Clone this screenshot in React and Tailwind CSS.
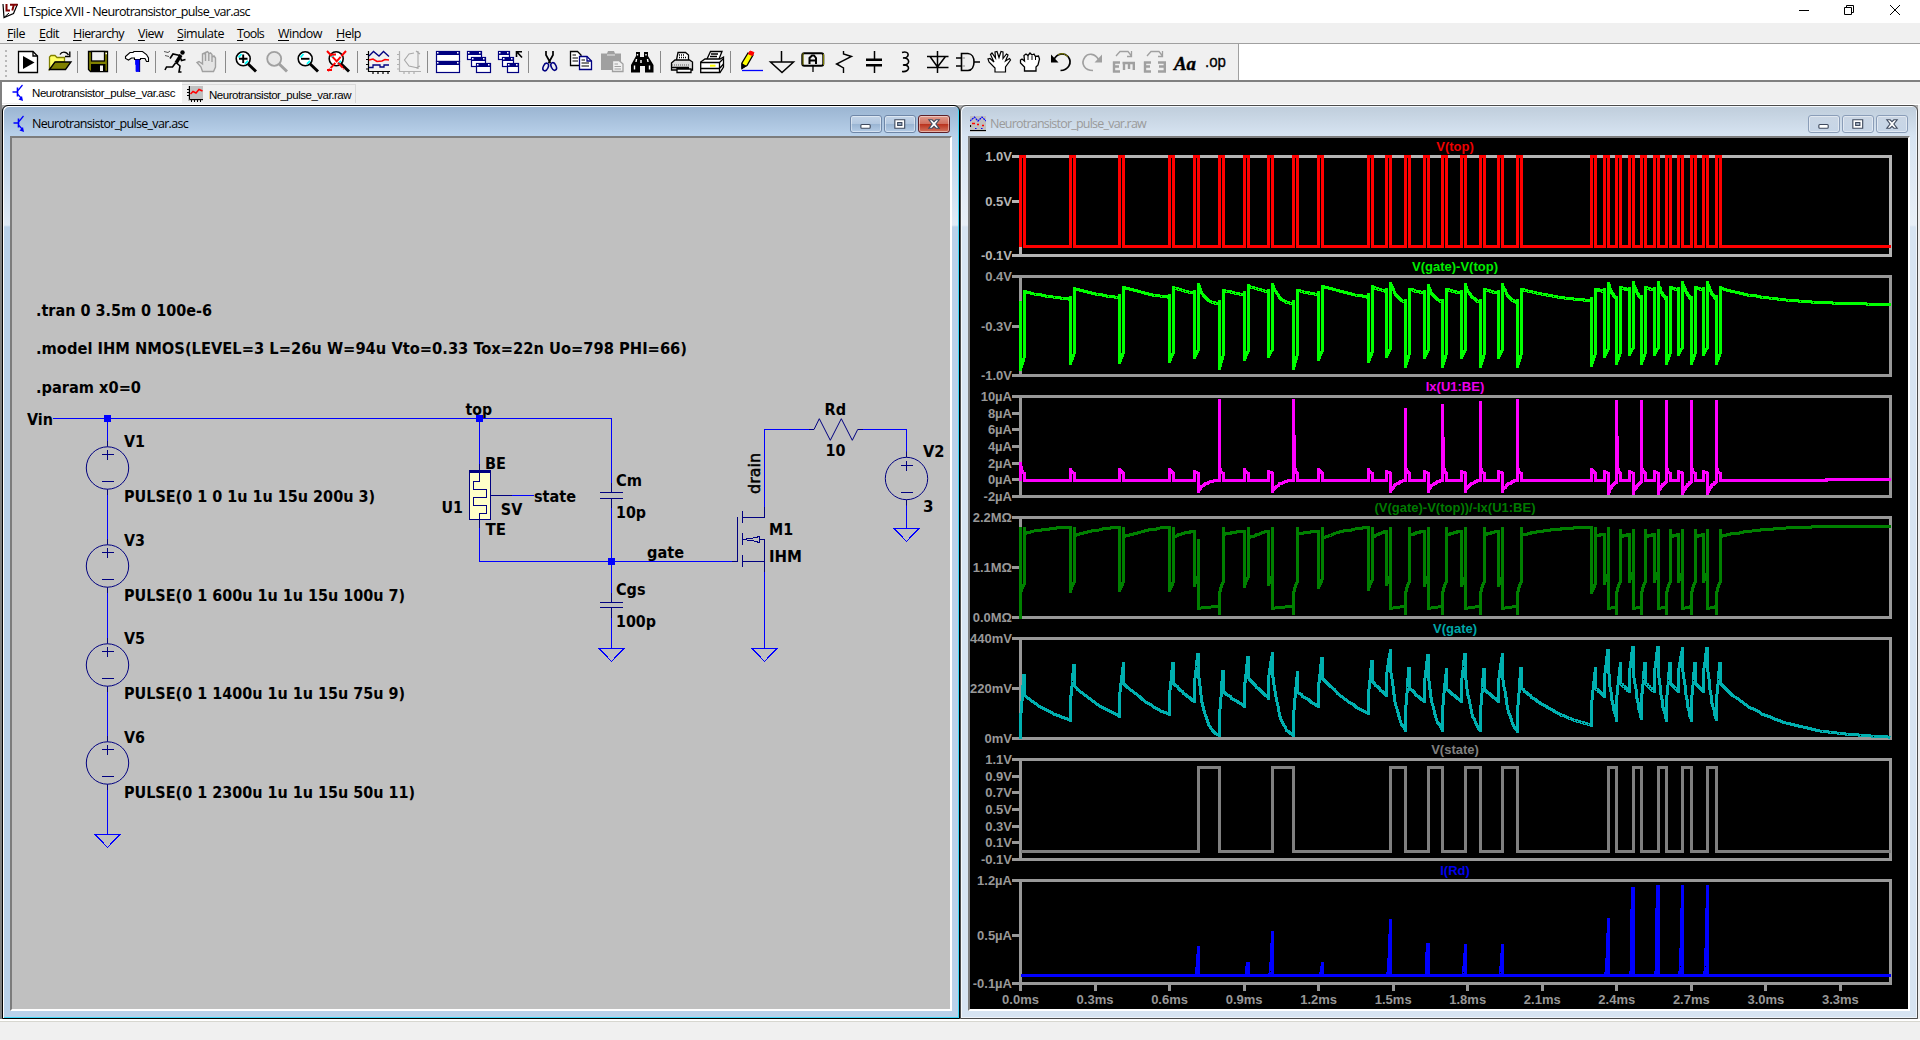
import React, { useLayoutEffect, useRef, useState } from "react";

/* ---------- text fitted to a given width ---------- */
function Fit({ w, className = "", children }) {
  const ref = useRef(null);
  const [ls, setLs] = useState(0);
  useLayoutEffect(() => {
    const n = ref.current.textContent.length;
    setLs((w - ref.current.getBoundingClientRect().width) / n);
  }, [w]);
  return (
    <span ref={ref} className={`inline-block whitespace-pre ${className}`} style={{ letterSpacing: ls }}>
      {children}
    </span>
  );
}

/* ---------- toolbar icons, each on a 24x24 grid ---------- */
const Icon = ({ children, w = 24, h = 24 }) => (
  <svg width={w} height={h} viewBox={`0 0 ${w} ${h}`} className="block shrink-0 overflow-visible" fill="none" stroke="#000" strokeWidth="1.3">
    {children}
  </svg>
);

const IconRun = () => (
  <Icon>
    <path d="M2.5 1.5H17L21.5 6V22.5H2.5Z" fill="#fff" />
    <path d="M17 1.5V6H21.5" />
    <path d="M7 6V19L18.5 12.5Z" fill="#000" stroke="none" />
  </Icon>
);
const IconOpen = () => (
  <Icon>
    <path d="M2.5 19.5V7L4 5.5H8L10 7.5H17.5V12H9Z" fill="#ffff66" stroke="#808000" />
    <path d="M2.5 19.5L8 12H24L18.5 19.5Z" fill="#808000" />
    <path d="M13 4.5C14.5 1.5 19 1 21.5 5M22.8 1.5V6.5H18" strokeWidth="1.4" />
  </Icon>
);
const IconSave = () => (
  <Icon>
    <path d="M2.5 1.5H21.5V21.5H4.5L2.5 19.5Z" fill="#808000" stroke="#000" />
    <rect x="5.5" y="1.5" width="13" height="9.5" fill="#f0f0f0" />
    <path d="M19.5 3.5H21" stroke="#fff" />
    <rect x="5" y="14" width="14.5" height="8" fill="#000" stroke="none" />
    <rect x="14" y="15.5" width="3" height="5.5" fill="#f0f0f0" stroke="none" />
  </Icon>
);
const IconHammer = () => (
  <Icon>
    <path d="M.5 6.5L5 2.5H8L9 1.5H17.5L21.5 4.5L23.5 8V11.5H21.5L20 8.5H15.5V9.5H9.5V8H6.5L3.5 10L.5 8.5Z" fill="#fff" strokeWidth="1.1" />
    <path d="M10.5 10H14.5V14.5H14V21.5H11V14.5H10.5Z" fill="#0000ff" stroke="#0000ff" strokeWidth=".8" />
    <path d="M14.6 10V22" stroke="#000080" strokeWidth="1.1" />
  </Icon>
);
const IconMan = () => (
  <Icon>
    <circle cx="18.5" cy="2.5" r="2.2" fill="#000" stroke="none" />
    <path d="M17 5L12 13" strokeWidth="3.4" />
    <path d="M16 5.5L9 4L6 8.5M16 6.5L17.5 10.5L21.5 9.5M12 12.5L16 16L15 22L17.5 22M11.5 13L8.5 17H2.5L1 20" strokeWidth="1.6" />
    <path d="M0 1.5L4 2.5L6 1M1 5.5L5 6.5" strokeWidth="1" stroke="#555" />
  </Icon>
);
const IconHand = () => (
  <Icon>
    <path d="M7.5 21.5L6 17L2 12.5L4 11.5L7.5 14V4L9.5 3L10.5 5V11V2.5L12.5 1.5L13.8 3V11V4L15.5 3L17 4.5V12V7L19 6L20.5 8V17L18.5 21.5Z" fill="#e4e4e4" stroke="#a0a0a0" strokeWidth="1.4" />
  </Icon>
);
const Lens = ({ gray, children }) => (
  <>
    <circle cx="9.2" cy="8.8" r="7" fill={gray ? "#e8e8e8" : "#fff"} stroke={gray ? "#a0a0a0" : "#000"} strokeWidth={gray ? 1.8 : 1.6} />
    {!gray && <path d="M4.5 7.5L7.5 4M11 13.8L14 10.8" stroke="#00ffff" strokeWidth="1.8" />}
    <path d="M14.2 14L22 21.5" stroke={gray ? "#a0a0a0" : "#000"} strokeWidth="3" />
    {children}
  </>
);
const IconZoomIn = () => (
  <Icon><Lens><path d="M9.2 4.5V13M5 8.8H13.5" strokeWidth="1.9" /></Lens></Icon>
);
const IconZoomPan = () => (
  <Icon><Lens gray /></Icon>
);
const IconZoomOut = () => (
  <Icon><Lens><path d="M5 8.8H13.5" strokeWidth="1.9" /></Lens></Icon>
);
const IconZoomFit = () => (
  <Icon>
    <Lens />
    <path d="M0 1L17 19M19 1L1 21M0 20H5M4 4.5H9" stroke="#ff0000" strokeWidth="2" strokeDasharray="7 1" />
  </Icon>
);
const IconPlot = () => (
  <Icon>
    <path d="M2.5 1V21.5H24M0 4.5H2M0 9.5H2M0 14.5H2M0 19H2M7 22V24M12 22V24M17 22V24M22 22V24" strokeWidth="1.2" />
    <path d="M3 6L7.5 1.5L13 6L17.5 1.5L23 6.5" stroke="#000080" />
    <path d="M3 10L7 9L11 11.5L16 11L19 9.5L23 10" stroke="#ff0000" strokeWidth="1.6" />
    <path d="M3 17.5H7V15H14V17H18V15H23" stroke="#000080" />
  </Icon>
);
const IconSpectrum = () => (
  <Icon>
    <path d="M2.5 1V21.5H24M0 4.5H2M0 9.5H2M0 14.5H2M0 19H2M7 22V24M12 22V24M17 22V24" stroke="#b0b0b0" strokeWidth="1.2" />
    <path d="M21 1V19M17 3L12 4L7.5 10L12 16L21 18M19 1L23 4M19 18L23 16" stroke="#a8a8a8" strokeWidth="1.1" />
  </Icon>
);
const MiniWin = ({ x, y, w, h }) => (
  <>
    <rect x={x + 0.5} y={y + 0.5} width={w - 1} height={h - 1} fill="#fff" stroke="#000080" strokeWidth="1.2" />
    <rect x={x} y={y} width={w} height="4" fill="#000080" stroke="none" />
    <rect x={x + 1} y={y + 1} width="1.5" height="1.5" fill="#fff" stroke="none" />
    <rect x={x + w - 3} y={y + 1} width="1.5" height="1.5" fill="#fff" stroke="none" />
  </>
);
const IconTile = () => (
  <Icon><MiniWin x={0} y={1} w={24} h={11} /><MiniWin x={0} y={11} w={24} h={12} /></Icon>
);
const IconCascade = () => (
  <Icon><MiniWin x={0} y={1} w={15} h={9} /><MiniWin x={4} y={7} w={15} h={10} /><MiniWin x={9} y={13} w={15} h={10} /></Icon>
);
const IconCloseAll = () => (
  <Icon>
    <MiniWin x={0} y={1} w={12} h={9} /><MiniWin x={4} y={7} w={12} h={10} /><MiniWin x={9} y={13} w={12} h={10} />
    <path d="M18.5 7V1.8H24M19 2L24 7.5" strokeWidth="1.6" />
  </Icon>
);
const IconCut = () => (
  <Icon>
    <path d="M9 1V5L13.5 13M16 1V5L11.5 13" strokeWidth="1.7" />
    <ellipse cx="8.7" cy="17" rx="2.4" ry="4" stroke="#000080" strokeWidth="1.6" transform="rotate(25 8.7 17)" />
    <ellipse cx="16.7" cy="16.5" rx="2.4" ry="4" stroke="#000080" strokeWidth="1.6" transform="rotate(-25 16.7 16.5)" />
  </Icon>
);
const IconCopy = () => (
  <Icon>
    <path d="M2.5 1.5H9.5L13 5V15.5H2.5Z" fill="#fff" />
    <path d="M4.5 5H8M4.5 8H10M4.5 11H10" strokeWidth="1" />
    <path d="M11.5 6.5H19L23.5 11V19.5H11.5Z" fill="#fff" stroke="#000080" />
    <path d="M19 6.5V11H23.5" stroke="#000080" />
    <path d="M13.5 10H17M13.5 13H21M13.5 16H21" strokeWidth="1" />
  </Icon>
);
const IconPaste = () => (
  <Icon>
    <path d="M2 3.5H8L9 1H15L16 3.5H22V20H2Z" fill="#a0a0a0" stroke="none" />
    <path d="M8 5H16" stroke="#e8e8e8" strokeWidth="1" />
    <path d="M13.5 10.5H20L24 14V21.5H13.5Z" fill="#f0f0f0" stroke="#a0a0a0" />
    <path d="M15.5 14H19M15.5 16.5H22M15.5 19H22" stroke="#a0a0a0" strokeWidth="1" />
  </Icon>
);
const IconFind = () => (
  <Icon>
    <path d="M6 2H10V7H12H14V2H18V6L23.5 15V22.5H15V16H10V22.5H1V15L6 6Z" fill="#000" stroke="none" />
    <path d="M7.5 4V5.5M16 4V5.5M6.5 9L6 12M17.5 9L18 12M4.5 15.5V19.5M19.5 15.5V19.5M11 10V13" stroke="#fff" strokeWidth="1.4" />
  </Icon>
);
const IconPrint = () => (
  <Icon>
    <path d="M7.5 10L9 2.5H16.5L19.5 5V10" fill="#fff" />
    <path d="M2.5 13L6 10H20.5L23.5 12V20H2.5Z" fill="#ddd" />
    <path d="M3 15H20" strokeDasharray="1 1" stroke="#888" />
    <path d="M2.5 17.5H20M8 22.5H22V19H8Z" fill="#fff" />
    <path d="M10 5H16M10 7.5H17" strokeDasharray="1 1" />
  </Icon>
);
const IconSetup = () => (
  <Icon>
    <path d="M7 9L10.5 1.5H22L19 9" fill="#fff" />
    <path d="M11 4H18M10 6.5H17" />
    <path d="M.7 12L5 9H20L23.5 7V17L20 22.5H.7Z" fill="#fff" />
    <path d="M.7 12.5H19.5L23.5 8.5M.7 18.5H19.5M19.5 12.5V22.5M20 18L23.5 14" />
    <path d="M10 15.7H15.5" stroke="#ffff00" strokeWidth="2" />
  </Icon>
);
const IconPencil = () => (
  <Icon>
    <path d="M3 18V13L9 3L14 5L8 15.5Z" fill="#ffff00" stroke="#000" />
    <path d="M9.5 4L11 1L15 2.5L13.5 5.5Z" fill="#ff0000" stroke="#ff0000" strokeWidth="1" />
    <path d="M3 14L6.5 16L3 18.5Z" fill="#000" />
    <path d="M3 20.5H24" stroke="#0000ff" />
  </Icon>
);
const IconGround = () => (
  <Icon><path d="M11.5 1V12M.5 12H23.5L12 22.5Z" strokeWidth="1.5" /></Icon>
);
const IconLabel = () => (
  <Icon>
    <rect x="1.3" y="3.3" width="21" height="12.4" rx="2" fill="#f0f0f0" strokeWidth="2" />
    <path d="M2 3V15M22.5 4V15" stroke="#808000" strokeWidth="1" />
    <path d="M8.5 14V8L11 5.5H13L15 8V14M8.5 10.5H15" strokeWidth="2" />
    <path d="M12 16V22" />
  </Icon>
);
const IconRes = () => (
  <Icon><path d="M11.5 1V4L19.5 6.5L4.5 14L11.5 18V23M4.5 13.5L11.5 18" strokeWidth="1.4" /></Icon>
);
const IconCap = () => (
  <Icon><path d="M11.5 1V9M11.5 16V23" strokeWidth="1.5" /><path d="M3 9.7H19M3 15.2H19" strokeWidth="2.4" /></Icon>
);
const IconInd = () => (
  <Icon><path d="M8 2.5C16 0 16 8.5 9 8C16.5 7 16.5 16 9 15C16.5 14 16.5 22.5 8 21.5" strokeWidth="1.6" /></Icon>
);
const IconDiode = () => (
  <Icon><path d="M12.5 1V23M2 6.5H23.5M5 6.5L12.5 17L20.5 6.5M2 17.5H23.5" strokeWidth="1.5" /></Icon>
);
const IconGate = () => (
  <Icon><path d="M0 8H6M0 16H6M18 12H24" /><path d="M5.5 3.5H12C20 4 20 20 12 20.5H5.5Z" strokeWidth="1.6" fill="#eee" /><path d="M6 8H9M6 16H9" strokeWidth="1" stroke="#888" /></Icon>
);
const IconMove = () => (
  <Icon>
    <path d="M8 22V18L2 12L1 9L3 8.5L7 12L3.5 4.5L5 3L8.5 8L8 2L10 1.5L12 7.5L14 1.5L16 2V8.5L19.5 4L21 5L18.5 11L22.5 8.5L23.5 10L18.5 17V22Z" fill="#fff" strokeWidth="1.2" />
  </Icon>
);
const IconDrag = () => (
  <Icon>
    <path d="M6.5 21V17L2.5 13V10L4 9L6.5 11L6 5.5L8 4L10 5.5L12 3L14 5L16 4L17.5 6.5L20.5 6L21.5 9L20 15L18 17V21Z" fill="#fff" strokeWidth="1.3" />
    <path d="M10 6V10M14 6V10M17.5 7V10" strokeWidth="1" />
  </Icon>
);
const IconUndo = () => (
  <Icon>
    <path d="M5 9.5C8 3 15 2.5 19 6.5C24 13 19 20.5 11.5 20.5" strokeWidth="1.7" />
    <path d="M9 4.5L14 3.5L19 6.5" stroke="#808000" strokeWidth="1" />
    <path d="M2 4.5V12.5H9.5Z" fill="#000" stroke="none" />
  </Icon>
);
const IconRedo = () => (
  <Icon>
    <path d="M18.5 9.5C15 3 8 3 5 7C0 14 5 20.5 13 20.5" stroke="#a0a0a0" strokeWidth="1.7" />
    <path d="M22 4.5V12.5H14.5Z" fill="#a0a0a0" stroke="none" />
  </Icon>
);
const EFlat = () => (
  <path d="M2 12.5H9M2 16.5H8M2 21.5H9M3 11.5V22.5" stroke="#a0a0a0" strokeWidth="2.4" />
);
const IconRotate = () => (
  <Icon>
    <path d="M5 6L9 1.5H17L20.5 6M20.5 1V6.5H16" stroke="#a0a0a0" />
    <EFlat />
    <path d="M11.5 13H24M13 13V20M18 13V19M22.8 13V20" stroke="#a0a0a0" strokeWidth="2.4" />
  </Icon>
);
const IconMirror = () => (
  <Icon>
    <path d="M5 6L9 1.5H17L20.5 6M20.5 1V6.5H16" stroke="#a0a0a0" />
    <EFlat />
    <path d="M16 12.5H24M17 16.5H23M16 21.5H24M22.8 11.5V22.5" stroke="#a0a0a0" strokeWidth="2.4" />
  </Icon>
);
const IconText = () => (
  <Icon>
    <text x="1" y="19.5" fontFamily="Liberation Serif, serif" fontStyle="italic" fontWeight="bold" fontSize="19" textLength="22" lengthAdjust="spacingAndGlyphs" fill="#000" stroke="#000" strokeWidth=".4">Aa</text>
  </Icon>
);
const IconOp = () => (
  <Icon>
    <text x="1" y="17.3" fontFamily="Liberation Sans, sans-serif" fontSize="17" textLength="21" lengthAdjust="spacingAndGlyphs" fill="#000" stroke="#000" strokeWidth=".3">.op</text>
  </Icon>
);

const TOOLS = [
  [IconRun, IconOpen],
  [IconSave],
  [IconHammer],
  [IconMan, IconHand],
  [IconZoomIn, IconZoomPan, IconZoomOut, IconZoomFit],
  [IconPlot, IconSpectrum],
  [IconTile, IconCascade, IconCloseAll],
  [IconCut, IconCopy, IconPaste, IconFind],
  [IconPrint, IconSetup],
  [IconPencil, IconGround, IconLabel, IconRes, IconCap, IconInd, IconDiode, IconGate, IconMove, IconDrag, IconUndo, IconRedo, IconRotate, IconMirror, IconText, IconOp],
];

/* ---------- small document icons ---------- */
const AscIcon = () => (
  <svg width="16" height="18" viewBox="0 0 16 18" className="shrink-0" fill="none" stroke="#0000ff" strokeWidth="1.2">
    <path d="M1.5 8H6M6.5 3.5V12.5" strokeWidth="1.6" />
    <path d="M7 6.5L11.5 1M7 10.5L10.5 14.5" />
    <path d="M12 17L7.5 15.5L11 12Z" fill="#0000ff" stroke="none" />
  </svg>
);
const RawTabIcon = () => (
  <svg width="16" height="17" viewBox="0 0 16 17" className="shrink-0" fill="none">
    <rect x="1" y="0" width="15" height="15" fill="#c0c0c0" />
    <path d="M2.5 0V13.5H16M0 3.5H2M0 6.5H2M0 9.5H2M4.5 14V16M7.5 14V16M10.5 14V16M13.5 14V16" stroke="#000" />
    <path d="M3.5 8L6 5.5L9 7L12 3.5L15.5 5" stroke="#ff0000" strokeWidth="1.5" />
  </svg>
);
const RawIcon = () => (
  <svg width="16" height="16" viewBox="0 0 16 16" className="shrink-0" fill="none">
    <rect width="16" height="16" fill="#c0c0c0" />
    <path d="M0 5L4.5 1L8 5L12 1L16 5" stroke="#0000ff" strokeWidth="1.2" strokeDasharray="2 .7" />
    <path d="M2 7.5H5M7 8.5H9M12 9.5H14" stroke="#ff0000" strokeWidth="1.5" />
    <path d="M5 12.5H6.5M11 12.5H12.5" stroke="#0000ff" />
    <path d="M0 14.5H16M.5 9V11" stroke="#000" strokeWidth="1.2" />
  </svg>
);
const AppIcon = () => (
  <svg width="17" height="16" viewBox="0 0 17 16" className="-mt-px shrink-0" fill="none">
    <path d="M1 1L2 14.5L11.5 10.5L15.5 1" stroke="#000" strokeWidth="1.2" fill="#fff" />
    <path d="M4.5 1V7.5H8M8 1.8H15.5M11.8 2L10.3 7.5" stroke="#800000" strokeWidth="2" />
    <path d="M2 14.5L7 10" stroke="#000" />
  </svg>
);

/* ---------- MDI child window frame ---------- */
const btnGlyphs = {
  min: <rect x="10.5" y="8.5" width="10" height="4" rx="1" />,
  max: <path fillRule="evenodd" d="M10.5 3.5H21V12.5H10.5ZM13.5 6.5H18V9.5H13.5Z" />,
  close: <path d="M10.5 3.5H14L16 5.5L18 3.5H21.5L18 8L21.5 12.5H18L16 10.5L14 12.5H10.5L14 8Z" />,
};
function CaptionButton({ kind, active }) {
  const look = !active
    ? "border-[#8a9db8] bg-gradient-to-b from-[#cad6e4] to-[#c6d5e7]"
    : kind === "close"
    ? "border-[#5c1f28] bg-[linear-gradient(#e09a8c_0%,#d0705f_48%,#b9301b_50%,#d2755f_100%)]"
    : "border-[#6f87a8] bg-[linear-gradient(#c3d4e8_0%,#b3c8e0_48%,#99b4d2_50%,#b4cce6_100%)]";
  return (
    <div className={`h-[18px] w-8 rounded-[3px] border shadow-[inset_0_0_0_1px_rgba(255,255,255,0.45)] ${look}`}>
      <svg width="30" height="16" viewBox="0 0 32 16" fill="#fff" stroke="#3f4a5e" strokeWidth="1.2">{btnGlyphs[kind]}</svg>
    </div>
  );
}

function ChildWindow({ active, icon, title, children }) {
  const frame = active
    ? "border-black bg-[linear-gradient(#9ab4d1_0px,#b9d1ea_30px,#dfeaf6_119px,#b9d1ea_121px)] shadow-[inset_1px_1px_0_#fff,inset_-1px_-1px_0_#3fd8f8]"
    : "border-[#4c4c4c] bg-[linear-gradient(#bfcddb_0px,#d7e4f2_30px,#e8eff7_119px,#d7e4f2_121px)] shadow-[inset_1px_1px_0_#f4f8fc,inset_-1px_-1px_0_#eef3f9]";
  return (
    <section className={`flex h-[914px] w-[958px] flex-col rounded-t-[6px] border ${frame}`}>
      <header className="flex h-[30px] shrink-0 items-center pl-[9px] pr-[9px] pt-[6px]">
        {icon}
        <Fit w={156} className={`ml-1 text-[12.5px] ${active ? "text-black" : "text-[#9a9a9a]"}`}>{title}</Fit>
        <div className="-mt-px ml-auto flex gap-[2px]">
          <CaptionButton kind="min" active={active} />
          <CaptionButton kind="max" active={active} />
          <CaptionButton kind="close" active={active} />
        </div>
      </header>
      <div className="mx-[7px] mb-[7px] flex-1 border-b-2 border-l-2 border-r-2 border-t-2 border-b-white border-l-[#7c7c7c] border-r-white border-t-[#7c7c7c]">{children}</div>
    </section>
  );
}

/* ---------- schematic ---------- */
const LABELS = [
  [36, 316, 176, ".tran 0 3.5m 0 100e-6"],
  [36, 354, 651, ".model IHM NMOS(LEVEL=3 L=26u W=94u Vto=0.33 Tox=22n Uo=798 PHI=66)"],
  [36, 393, 105, ".param x0=0"],
  [27, 424.5, 26, "Vin"],
  [124, 447, 21, "V1"],
  [124, 502, 251, "PULSE(0 1 0 1u 1u 15u 200u 3)"],
  [124, 545.5, 21, "V3"],
  [124, 600.5, 281, "PULSE(0 1 600u 1u 1u 15u 100u 7)"],
  [124, 644, 21, "V5"],
  [124, 699, 281, "PULSE(0 1 1400u 1u 1u 15u 75u 9)"],
  [124, 743, 21, "V6"],
  [124, 798, 291, "PULSE(0 1 2300u 1u 1u 15u 50u 11)"],
  [465.5, 414.5, 26.5, "top"],
  [485, 468.7, 21, "BE"],
  [441.5, 513, 21.5, "U1"],
  [485.5, 534.7, 20.5, "TE"],
  [500.8, 515.3, 21.5, "SV"],
  [534, 501.7, 42, "state"],
  [616, 485.7, 26, "Cm"],
  [616, 517.7, 30, "10p"],
  [616, 594.7, 29.5, "Cgs"],
  [616, 627.3, 40, "100p"],
  [647, 557.7, 37, "gate"],
  [769, 534.7, 24, "M1"],
  [769, 561.7, 33, "IHM"],
  [824.5, 414.7, 21.5, "Rd"],
  [825.5, 455.7, 20, "10"],
  [923, 457.3, 21.5, "V2"],
  [923, 512.3, 10.5, "3"],
];
const SOURCES = [
  [107.5, 468], [107.5, 566], [107.5, 665], [107.5, 763], [906.5, 478.5],
];
const GROUNDS = [
  [107.5, 834.5], [611.5, 648.5], [764.5, 648.5], [906.5, 528.5],
];

function Schematic() {
  return (
    <svg width="938" height="871" viewBox="12 138 938 871" className="block bg-[#c0c0c0]" fill="none" strokeWidth="1">
      <g stroke="#0000ff" shapeRendering="crispEdges">
        <path d="M53 418.5H611.5V492M479.5 418.5V470M107.5 418.5V834.5M479.5 520V561.5H737.5M611.5 499V602M611.5 608V648.5M764.5 648.5V566M764.5 517V429.5H814M859 429.5H906.5V457M906.5 500V528.5M512 495.5H534" />
        {GROUNDS.map(([x, y]) => <path key={x} d={`M${x - 12.5} ${y}H${x + 12.5}L${x} ${y + 12.8}Z`} />)}
      </g>
      <g fill="#0000ff" shapeRendering="crispEdges">
        <rect x="104" y="415" width="7" height="7" />
        <rect x="476" y="415" width="7" height="7" />
        <rect x="608" y="558" width="7" height="7" />
      </g>
      <g stroke="#000080">
        {SOURCES.map(([x, y]) => (
          <g key={y}>
            <path d={`M${x} ${y - 27}V${y + 27}`} />
            <circle cx={x} cy={y} r="21.2" fill="#c0c0c0" />
            <path d={`M${x - 5.5} ${Math.round(y - 13) - 0.5}h12M${x} ${Math.round(y - 18)}v10M${x - 5.5} ${Math.round(y + 13) + 0.5}h12`} />
          </g>
        ))}
      </g>
      <g stroke="#000080" shapeRendering="crispEdges">
        <path d="M479.5 464V471M479.5 519V528M491 495.5H512" />
        <rect x="469.5" y="470.5" width="21" height="49" fill="#ffffc8" />
        <rect x="469" y="470" width="22" height="3" fill="#000080" stroke="none" />
        <path d="M479.5 472V481.5H473.5V489.5H486.5V497.5H473.5V505.5H486.5V513.5H479.5V520" />
        <path d="M600 492.5H623M600 498.5H623M611.5 483V492M611.5 499V508M600 602.5H623M600 607.5H623M611.5 593V602M611.5 608V618" />
        <path d="M732 561.5H737.5V517M742.5 511V523M742.5 533V545M742.5 555V567M742.5 517.5H764.5V507M742.5 561.5H764.5M759.5 539.5H764.5V572" />
        <path d="M743 539.5L757 537.5V536.5H759.5V542.5H757V541.5Z" />
      </g>
      <path d="M809 429.5H814L819.3 418.7L830.3 440.3L841.3 418.7L852.3 440.3L857.7 429.5H863" stroke="#000080" />
      <g fill="#000" fontFamily="'DejaVu Sans Condensed', 'DejaVu Sans', sans-serif" fontWeight="bold" fontSize="16">
        {LABELS.map(([x, y, w, t], i) => (
          <text key={i} x={x} y={y} textLength={w} lengthAdjust="spacingAndGlyphs">{t}</text>
        ))}
        <text transform="translate(760 494) rotate(-90)" textLength="41" lengthAdjust="spacingAndGlyphs" fontWeight="normal" stroke="#000" strokeWidth=".5">drain</text>
      </g>
    </svg>
  );
}

/* ---------- waveforms ----------
   Each pulse: time in µs, gate level at the rising edge and at its peak, and the
   role it has: "on" sets the state, "off" clears it. Levels are thirds of a
   pixel below y = 380. */
const PULSES = [
  { t: 0, v: 1075, p: 887, r0: 640 },
  { t: 200, v: 1020, p: 857, r0: 635 },
  { t: 400, v: 1008, p: 850, r0: 632 },
  { t: 600, v: 1004, p: 850, r0: 630 },
  { t: 700, v: 964, p: 824, r0: 615, on: 1, i: 622 },
  { t: 800, v: 1066, p: 874, off: 60 },
  { t: 900, v: 978, p: 832, r0: 620, i: 670 },
  { t: 1000, v: 955, p: 820, r0: 612, on: 1, i: 577 },
  { t: 1100, v: 1066, p: 877, off: 60 },
  { t: 1200, v: 978, p: 834, r0: 623, i: 670 },
  { t: 1400, v: 1000, p: 843, r0: 627 },
  { t: 1475, v: 947, p: 810, r0: 612, on: 1, i: 540 },
  { t: 1550, v: 1050, p: 865, off: 88 },
  { t: 1625, v: 963, p: 825, r0: 615, on: 1, i: 612 },
  { t: 1700, v: 1050, p: 867, off: 75 },
  { t: 1775, v: 963, p: 823, r0: 615, on: 1, i: 617 },
  { t: 1850, v: 1050, p: 867, off: 68 },
  { t: 1925, v: 963, p: 823, r0: 615, on: 1, i: 617 },
  { t: 2000, v: 1053, p: 864, off: 60 },
  { t: 2300, v: 1036, p: 865, r0: 637 },
  { t: 2350, v: 948, p: 811, r0: 610, on: 1, i: 538 },
  { t: 2400, v: 1020, p: 850, off: 63 },
  { t: 2450, v: 934, p: 802, r0: 604, on: 1, i: 445 },
  { t: 2500, v: 1016, p: 850, off: 63 },
  { t: 2550, v: 934, p: 802, r0: 604, on: 1, i: 438 },
  { t: 2600, v: 1020, p: 850, off: 63 },
  { t: 2650, v: 934, p: 804, r0: 604, on: 1, i: 438 },
  { t: 2700, v: 1020, p: 850, off: 63 },
  { t: 2750, v: 934, p: 804, r0: 604, on: 1, i: 438 },
  { t: 2800, v: 1018, p: 850, off: 63 },
];
const X = (us) => 1020.5 + us * 0.24846;
const Y = (z) => 380 + z / 3;
const END = 3500;

function decay(a, b, t0, t1, tau) {
  const out = [];
  const k = 1 - Math.exp(-(t1 - t0) / tau);
  const steps = t1 - t0 > 250 ? 40 : 12;
  for (let n = 0; n <= steps; n++) {
    const t = t0 + ((t1 - t0) * n) / steps;
    out.push([t, a + ((b - a) * (1 - Math.exp(-(t - t0) / tau))) / k]);
  }
  return out;
}

function build() {
  const top = [[0, 246.5]], diff = [], cur = [], res = [], gate = [], state = [[0, 851.5]], rd = [[0, 975.5]];
  const green = (z, pulse) => 276.5 + ((0.4 - ((1075 - z) / 300) * 0.44 + (pulse ? 1 : 0)) / 1.4) * 99;
  PULSES.forEach((q, n) => {
    const next = PULSES[n + 1];
    const t1 = next ? next.t : END;
    const vEnd = next ? next.v : 1071;
    const t = q.t, e = t + 16;
    top.push([t, 246.5], [t, 156.5], [e, 156.5], [e, 246.5]);

    const settle = q.p + 60;
    const tail = decay(settle, vEnd, e, t1, q.on ? 27 : 215);
    gate.push([t, Y(q.v)], [t, Y(q.v - 60)], [t + 8, Y((q.v - 60 + q.p) / 2 - 5)], [t + 13, Y(q.p)], [e, Y(q.p)], [e, Y(settle)]);
    tail.forEach(([a, b]) => gate.push([a, Y(b)]));

    diff.push([t, green(q.v - 20, false)], [t, green(q.v - 60, true)], [e, green(q.p, true)], [e, green(settle, false)]);
    tail.forEach(([a, b]) => diff.push([a, green(b, false)]));

    if (q.off) cur.push([t, Y(300)], [t, Y(q.off)], [t + 1, Y(262)]);
    else cur.push([t, Y(301)], [t, Y(n === 0 ? 250 : q.on ? 275 : 267)]);
    cur.push([t + 10, Y(278)], [e, Y(280)]);
    if (q.on) {
      cur.push([e, Y(t < 2300 ? 335 : 340)]);
      decay(t < 2300 ? 332 : 338, t < 2300 ? 300 : 305, e, t1, 32).forEach(([a, b]) => cur.push([a, Y(b)]));
    } else cur.push([e, Y(301)], [next ? t1 : 3245, Y(301)]);

    if (q.off) res.push([t, Y(680)], [t, Y(700)], [t, Y(640)], [t + 8, Y(615)], [e, Y(604)]);
    else res.push([t, Y(n === 0 ? 712 : q.r0)], [t, Y(q.r0)], [t + 10, Y(q.r0 - 18)], [e, Y(q.r0 - 30)]);
    res.push([e, Y(t === 700 ? 482 : t >= 2400 ? 450 : 445)]);
    if (q.on) res.push([e, Y(686)], [e + 20, Y(682)], [t1, Y(680)]);
    else {
      const start = n === 0 ? 460 : Math.min(475, 460 + (887 - q.p) * 0.27);
      const stop = t1 - t > 150 ? 441 : t1 - t > 60 ? 453 : 464;
      decay(start, next ? stop : 438, e, t1, next ? 150 : 170).forEach(([a, b]) => res.push([a, Y(b)]));
    }

    if (q.on) state.push([e, 851.5], [e, 767.5]);
    if (q.off) state.push([t, 767.5], [t, 851.5]);

    if (q.i) {
      const h = 706 - q.i, y = (f) => 740 + (706 - h * f) / 3;
      rd.push([e - 12, 975.5], [e - 8, y(0.1)], [e - 5, y(0.5)], [e - 1, y(1)], [e, y(1)], [e, 975.5]);
    }
  });
  cur.push([3245, Y(298)], [END, Y(298)]);
  res.unshift([0, Y(440)]);
  gate.unshift([0, Y(1075)]);
  diff.unshift([0, 304]);
  top.push([END, 246.5]);
  state.push([END, 851.5]);
  rd.push([END, 975.5]);
  /* snap to pixel centres so the 3px pen stays even */
  const snap = (v) => Math.floor(v) + 0.5;
  const str = (a) => a.map(([t, y]) => `${snap(X(t))},${snap(y)}`).join(" ");
  return { top: str(top), diff: str(diff), cur: str(cur), res: str(res), gate: str(gate), state: str(state), rd: str(rd) };
}
const W = build();

const even = (a, b, labels) => labels.map((l, i) => [l, a + ((b - a) * i) / (labels.length - 1)]);
const PANES = [
  { title: "V(top)", base: 151, y0: 156.5, y1: 255.5, c: "#ff0000", tc: "#ee0000", d: W.top, frame: "#b4b4b4", ticks: [["1.0V", 156.5], ["0.5V", 201.5], ["-0.1V", 255.5]] },
  { title: "V(gate)-V(top)", base: 271, y0: 276.5, y1: 375.5, c: "#00ff00", tc: "#00ee00", d: W.diff, ticks: [["0.4V", 276.5], ["-0.3V", 326.5], ["-1.0V", 375.5]] },
  { title: "Ix(U1:BE)", base: 391, y0: 396.5, y1: 496.5, c: "#ff00ff", tc: "#ee00ee", d: W.cur, ticks: even(396.5, 496.5, ["10µA", "8µA", "6µA", "4µA", "2µA", "0µA", "-2µA"]) },
  { title: "(V(gate)-V(top))/-Ix(U1:BE)", base: 511.5, y0: 517.5, y1: 617.5, c: "#008000", tc: "#007a00", d: W.res, ticks: even(517.5, 617.5, ["2.2MΩ", "1.1MΩ", "0.0MΩ"]) },
  { title: "V(gate)", base: 632.5, y0: 638.5, y1: 738.5, c: "#00b0b0", tc: "#00a8a8", d: W.gate, ticks: even(638.5, 738.5, ["440mV", "220mV", "0mV"]) },
  { title: "V(state)", base: 753.5, y0: 759.5, y1: 859.5, c: "#808080", tc: "#808080", d: W.state, ticks: even(759.5, 859.5, ["1.1V", "0.9V", "0.7V", "0.5V", "0.3V", "0.1V", "-0.1V"]) },
  { title: "I(Rd)", base: 874.5, y0: 880.5, y1: 983.5, c: "#0000ff", tc: "#0000ee", d: W.rd, ticks: [["1.2µA", 880.5], ["0.5µA", 935.5], ["-0.1µA", 983.5]] },
];
const TIMES = ["0.0ms", "0.3ms", "0.6ms", "0.9ms", "1.2ms", "1.5ms", "1.8ms", "2.1ms", "2.4ms", "2.7ms", "3.0ms", "3.3ms"];

function Waveforms() {
  return (
    <svg width="938" height="871" viewBox="970 138 938 871" className="block bg-black" fill="none" strokeWidth="3" fontFamily="'Liberation Sans', Arial, sans-serif" fontWeight="bold" fontSize="13">
      {PANES.map((p) => (
        <g key={p.title}>
          <g stroke={p.frame || "#989898"} shapeRendering="crispEdges">
            <rect x="1020.5" y={p.y0} width="870" height={p.y1 - p.y0} />
            {p.ticks.map(([l, y]) => <path key={l} d={`M1012 ${Math.floor(y) + 0.5}H1020`} />)}
          </g>
          {p.ticks.map(([l, y]) => (
            <text key={l} x="1012" y={y + 4.5} textAnchor="end" fill={p.frame || "#989898"}>{l}</text>
          ))}
          <text x="1455" y={p.base} textAnchor="middle" fill={p.tc}>{p.title}</text>
          <polyline points={p.d} stroke={p.c} strokeLinejoin="round" shapeRendering="crispEdges" />
        </g>
      ))}
      {TIMES.map((l, i) => (
        <g key={l}>
          <path d={`M${Math.floor(X(i * 300)) + 0.5} 984V991`} stroke="#989898" shapeRendering="crispEdges" />
          <text x={X(i * 300)} y="1003.7" textAnchor="middle" fill="#989898">{l}</text>
        </g>
      ))}
    </svg>
  );
}

const MENU = [["File", 18], ["Edit", 20], ["Hierarchy", 51], ["View", 25], ["Simulate", 47], ["Tools", 27], ["Window", 44], ["Help", 25]];
const GAPS = ["ml-[7px]", "ml-[14px]", "ml-[14px]", "ml-[14px]", "ml-[14px]", "ml-[13px]", "ml-[14px]", "ml-[14px]"];

export default function App() {
  return (
    <div className="flex h-[1040px] w-[1920px] flex-col overflow-hidden bg-[#f0f0f0] font-['Open_Sans','Noto_Sans',sans-serif] text-[12.5px] leading-4 text-black">
      <header className="flex h-[23px] shrink-0 items-center bg-white pl-[2px]">
        <AppIcon />
        <Fit w={227} className="ml-1 mt-px">LTspice XVII - Neurotransistor_pulse_var.asc</Fit>
        <svg width="122" height="23" viewBox="1799 0 122 23" className="ml-auto mr-[-1px]" fill="none" stroke="#000">
          <path d="M1799 10.5H1809M1844.5 7.5H1851.5V14.5H1844.5ZM1846.5 7V5.5H1853.5V12.5H1852M1890 5L1900 15M1900 5L1890 15" />
        </svg>
      </header>

      <nav className="flex h-5 shrink-0 items-center pt-[2px]">
        {MENU.map(([m, w], i) => (
          <Fit key={m} w={w} className={GAPS[i]}>
            <span className="underline underline-offset-2">{m[0]}</span>{m.slice(1)}
          </Fit>
        ))}
      </nav>

      <div className="flex h-[37px] shrink-0 border-t border-[#a0a0a0] bg-white">
        <div className="flex w-[1239px] items-start border-r border-[#a0a0a0] bg-[#f0f0f0] pt-[6px]">
          <div className="ml-[5px] mr-[5px] h-[27px] w-[2px] bg-[repeating-linear-gradient(#b8b8b8_0_2px,transparent_2px_5px)]" />
          {TOOLS.map((group, g) => (
            <div key={g} className="flex items-center">
              {g > 0 && <div className="ml-[3px] mr-1 h-[22px] w-px bg-[#8a8a8a]" />}
              {group.map((C, i) => (
                <div key={i} className="w-[31px] pl-1"><C /></div>
              ))}
            </div>
          ))}
        </div>
      </div>

      <div className="flex h-[25px] shrink-0 items-start border-l-2 border-t-2 border-l-[#808080] border-t-[#808080] shadow-[inset_0_-1px_0_#fff]">
        <div className="flex h-[21px] w-[180px] items-center bg-white pl-[9px]">
          <AscIcon />
          <Fit w={143} className="ml-[5px] text-[11.5px] font-['Liberation_Sans',sans-serif]">Neurotransistor_pulse_var.asc</Fit>
        </div>
        <div className="mt-[2px] flex h-[19px] w-[174px] items-center border-r border-t border-[#d9d9d9] pl-[5px] pt-px">
          <RawTabIcon />
          <Fit w={142} className="ml-[6px] text-[11.5px] font-['Liberation_Sans',sans-serif]">Neurotransistor_pulse_var.raw</Fit>
        </div>
      </div>

      <main className="flex h-[914px] shrink-0 border-l-2 border-[#808080] bg-[linear-gradient(90deg,#ababab_1916px,#f0f0f0_1916px)]">
        <ChildWindow active icon={<AscIcon />} title="Neurotransistor_pulse_var.asc"><Schematic /></ChildWindow>
        <ChildWindow icon={<RawIcon />} title="Neurotransistor_pulse_var.raw"><Waveforms /></ChildWindow>
      </main>

      <footer className="flex flex-1 flex-col bg-[#f0f0f0]">
        <div className="h-[2px] bg-white" />
        <div className="h-px bg-[#d7d7d0]" />
      </footer>
    </div>
  );
}
